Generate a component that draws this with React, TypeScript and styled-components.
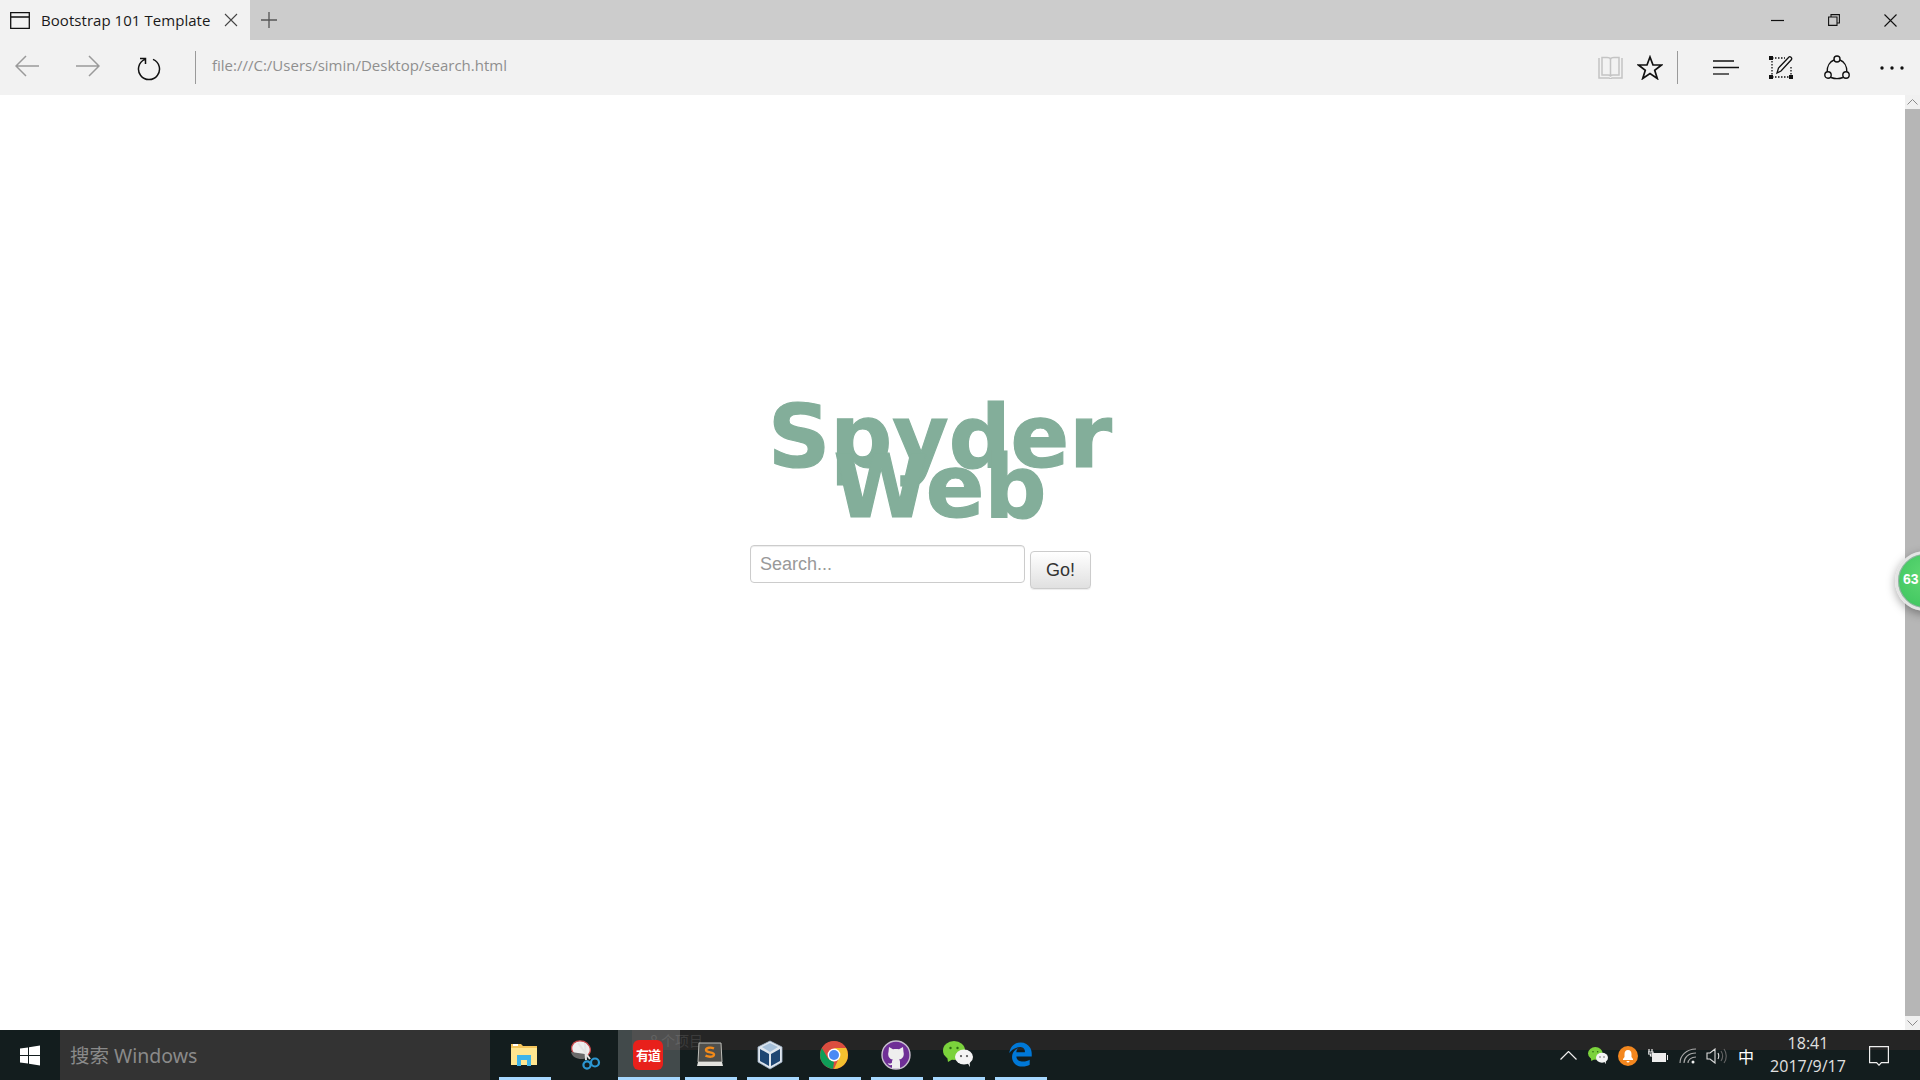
import React from "react";
import styled, { createGlobalStyle } from "styled-components";
import { FaEdgeLegacy } from "react-icons/fa6";

const Global = createGlobalStyle`
  html, body { margin: 0; padding: 0; height: 100%; overflow: hidden; background: #fff; }
  #root { height: 100%; }
  * { box-sizing: border-box; }
`;

const Windowed = styled.div`
  width: 1920px; height: 1080px; display: flex; flex-direction: column; position: relative; overflow: hidden;
  font-family: "Open Sans", "Noto Sans", sans-serif;
`;
const TabBar = styled.div`height: 40px; background: #cccccc; display: flex; align-items: center; flex: none;`;
const Tab = styled.div`
  width: 250px; height: 40px; background: #f2f2f2; display: flex; align-items: center; padding-left: 10px; flex: none;
`;
const TabTitle = styled.span`
  font-size: 15px; color: #1a1a1a; margin-left: 11px; width: 183px; white-space: nowrap; letter-spacing: 0.05px;
`;
const NewTab = styled.div`margin-left: 10px; display: flex;`;
const WindowControls = styled.div`margin-left: auto; display: flex; align-items: center; gap: 44px; padding-right: 23px;`;
const ToolBar = styled.div`height: 55px; background: #f2f2f2; display: flex; align-items: center; flex: none;`;
const NavSlot = styled.div`width: 61px; display: flex; justify-content: center; flex: none;`;
const NavGroup = styled.div`display: flex; margin-left: -4px;`;
const Divider = styled.div`width: 1px; height: 33px; background: #9a9a9a; flex: none;`;
const AddressDivider = styled(Divider)`margin-left: 16px;`;
const Address = styled.span`font-size: 15px; color: #8f8f8f; margin: -6px 0 0 16px; letter-spacing: 0;`;
const RightTools = styled.div`margin-left: auto; display: flex; align-items: center;`;
const HubSlot = styled.div`width: 55.5px; display: flex; justify-content: center; flex: none;`;
const SmallSlot = styled.div`width: 39px; display: flex; justify-content: center; flex: none;`;
const ToolDivider = styled(Divider)`margin: 0 20px 0 8px;`;

const Viewport = styled.div`flex: 1; display: flex; min-height: 0;`;
const Page = styled.div`flex: 1; background: #fff; padding: 317px 0 0 750px;`;
const Brand = styled.div`
  width: 380px; text-align: center; font-family: "DejaVu Sans", sans-serif; font-weight: 700;
  font-size: 86.5px; line-height: 50px; color: #83ae9a; -webkit-text-stroke: 1.2px #83ae9a;
`;
const SearchRow = styled.div`display: flex; align-items: flex-start; gap: 5px; margin-top: 33px;`;
const SearchInput = styled.input`
  width: 275px; height: 38px; border: 1px solid #ccc; border-radius: 4px; padding: 0 9px;
  font: 18px "Liberation Sans", Arial, sans-serif; color: #333; outline: none; box-shadow: inset 0 1px 1px rgba(0,0,0,.075);
  &::placeholder { color: #999; opacity: 1; }
`;
const GoButton = styled.button`
  width: 61px; height: 38px; margin-top: 6px; border: 1px solid #ccc; border-radius: 4px; padding: 0;
  font: 18px "Liberation Sans", Arial, sans-serif; color: #333;
  background: linear-gradient(to bottom, #fff 0%, #e0e0e0 100%);
  box-shadow: inset 0 1px 0 rgba(255,255,255,.15), 0 1px 1px rgba(0,0,0,.075);
`;
const Scrollbar = styled.div`width: 15px; background: #f0f0f0; display: flex; flex-direction: column; flex: none;`;
const ScrollArrow = styled.div`height: 14px; display: flex; align-items: center; justify-content: center; flex: none;`;
const ScrollThumb = styled.div`flex: 1; background: #b6b6b6;`;
const SpeedBall = styled.div`
  position: absolute; left: 1895px; top: 551px; width: 60px; height: 60px; border-radius: 50%;
  background: radial-gradient(circle at 50% 40%, #5fd873 0%, #45c963 70%, #3cba58 100%);
  border: 3px solid #e4e4e4; box-shadow: 0 3px 10px rgba(0,0,0,.35), inset 0 0 0 1px #9aa;
  color: #fff; font: 700 14px "Liberation Sans", Arial, sans-serif; padding: 17px 0 0 5px;
`;

const TaskBar = styled.div`height: 50px; background: #131d1e; display: flex; position: relative; flex: none;`;
const GhostBand = styled.div`
  position: absolute; left: 632px; right: 0; top: 0; height: 20px; background: #252525; color: #3c3c3c; font-size: 14px;
  line-height: 20px; padding-left: 18px; font-family: "Noto Sans CJK SC", sans-serif;
`;
const StartCell = styled.div`width: 60px; display: flex; align-items: center; justify-content: center; flex: none;`;
const SearchBox = styled.div`
  width: 430px; background: #333333; color: #8a8a8a; font-size: 19.5px; display: flex; align-items: center; padding: 0 0 2px 10px;
  font-family: "Noto Sans", "Noto Sans CJK SC", sans-serif; flex: none;
`;
const AppList = styled.div`display: flex; margin-left: 4px; flex: none;`;
const AppCell = styled.div<{ $active?: boolean; $open?: boolean }>`
  width: 62px; height: 50px; position: relative; display: flex; align-items: center; justify-content: center;
  padding: 0 2px 1px 0; z-index: 1;
  background: ${(p) => (p.$active ? "rgba(255,255,255,.2)" : "transparent")};
  &::after {
    content: ""; position: absolute; bottom: 0; height: 3px; background: #a6d8ff;
    left: ${(p) => (p.$active ? "0" : "5px")}; right: ${(p) => (p.$active ? "0" : "5px")};
    display: ${(p) => (p.$open ? "block" : "none")};
  }
`;
const YoudaoIcon = styled.div`
  width: 30px; height: 30px; border-radius: 6px; background: #e8201b; color: #fff; font: 700 13px "Noto Sans CJK SC", sans-serif;
  display: flex; align-items: center; justify-content: center; letter-spacing: -1px;
`;
const EdgeIcon = styled(FaEdgeLegacy)`color: #0078d7; width: 25px; height: 27px;`;
const VBoxSvg = styled.svg`margin-right: 4px;`;
const Tray = styled.div`margin-left: auto; display: flex; align-items: center; z-index: 1; padding-top: 1px;`;
const TrayItem = styled.div<{ $w: number }>`width: ${(p) => p.$w}px; display: flex; justify-content: center; flex: none;`;
const ImeLabel = styled.span`color: #fff; font: 16px "Noto Sans CJK SC", sans-serif; line-height: 20px;`;
const Clock = styled.div`
  width: 92px; margin: -1px 15px 0 0; color: #e0e0e0; font-size: 16px; text-align: center; line-height: 23px; white-space: nowrap;
`;

const line = { fill: "none", stroke: "#111", strokeWidth: 1.3 };
const grey = { fill: "none", stroke: "#9a9a9a", strokeWidth: 1.5 };

const WinLogo = () => (
  <svg width="20" height="21" viewBox="0 0 20 21"><path fill="#fff" d="M0 3.500l8-1.100v7.600H0zM9 2.200L20 .5v9.500H9zM0 11h8v7.600L0 17.500zM9 11h11v9.500L9 18.800z"/></svg>
);
const Folder = () => (
  <svg width="28" height="26" viewBox="0 0 28 26"><path fill="#f4c55c" d="M1 2h10l2 2h14v19H1z"/><path fill="#ffe68f" d="M1 6h26v17H1z"/><path fill="#fff" d="M3 2h5v2H3z"/><path fill="#3db4ea" d="M7 24V13h14v11h-4v-6h-6v6z"/></svg>
);
const Snip = () => (
  <svg width="30" height="30" viewBox="0 0 30 30">
    <ellipse cx="10" cy="9" rx="9.500" ry="8" fill="#eee" stroke="#c8474a" strokeWidth="1.300" transform="rotate(20 10 9)"/>
    <path fill="#6a6a6a" d="M0 12c1 7 12 9 17 5l-3-3z"/>
    <path stroke="#e4e4e4" strokeWidth="2" d="M7 3l12 16M14 3l1 17" fill="none"/>
    <circle cx="24" cy="22.500" r="4" fill="none" stroke="#2c97d3" strokeWidth="2.200"/>
    <circle cx="16" cy="25" r="3.600" fill="none" stroke="#2c97d3" strokeWidth="2.200"/>
  </svg>
);
const Sublime = () => (
  <svg width="28" height="26" viewBox="0 0 28 26">
    <path fill="#4f4f4c" stroke="#bdbdb8" strokeWidth="1" d="M3 1h22l1 19H2z"/>
    <path fill="#e3e3df" d="M2 20h24l1 4H1z"/>
    <path fill="none" stroke="#f28a1a" strokeWidth="2.400" d="M18 6.500c-3-1.400-8-1.200-8 1.600 0 3.200 8 1.300 8 4.400 0 2.700-5 2.700-8.500 1.200"/>
  </svg>
);
const VBox = () => (
  <VBoxSvg width="26" height="30" viewBox="0 0 26 30">
    <path fill="#dfe6ee" stroke="#9fb2c8" strokeWidth=".8" d="M13 1l12 6v15l-12 7-12-7V7z"/>
    <path fill="#1e4673" d="M3 9l9 5v12l-9-5z"/><path fill="#1e4673" d="M14 14l9-5v12l-9 5z"/>
    <path fill="#a6c0da" d="M13 3l8 4-8 5-8-5z"/>
  </VBoxSvg>
);
const Chrome = () => (
  <svg width="28" height="28" viewBox="0 0 28 28">
    <circle cx="14" cy="14" r="14" fill="#db4d3f"/>
    <path fill="#0f9d58" d="M14 28A14 14 0 0 1 1.900 7L8 17.500l6 3.500-1 7z"/>
    <path fill="#f3c02f" d="M14 28a14 14 0 0 0 12.100-21H14l6 7.500z"/>
    <path fill="#db4d3f" d="M2 7a14 14 0 0 1 24 0H14L8 12z"/>
    <circle cx="14" cy="14" r="6.400" fill="#fff"/><circle cx="14" cy="14" r="5" fill="#4a8af4"/>
  </svg>
);
const GitHub = () => (
  <svg width="30" height="30" viewBox="0 0 30 30">
    <circle cx="15" cy="15" r="14" fill="#6f2f96" stroke="#c9c0cf" strokeWidth="1.400"/>
    <path fill="#eee" d="M8 7l4 2.200c2-.4 4-.4 6 0L22 7l.5 5c1 3.500-.6 7-4.500 7.600.7.500 1 1.400 1 2.400v6.500h-8V25c-2 .4-3.500 0-4.300-2 1.400.7 3 1 4.200-.3 0-1 .2-2.200.9-3.100C8 19 6.500 15.500 7.500 12z"/>
  </svg>
);
const WeChat = ({ s = 30 }: { s?: number }) => (
  <svg width={s} height={s * 0.87} viewBox="0 0 30 26">
    <ellipse cx="11" cy="9.500" rx="11" ry="9.500" fill="#7bd23c"/><path fill="#7bd23c" d="M4 15l1 6 5-3z"/>
    <circle cx="7.500" cy="7" r="1.200" fill="#2c6b12"/><circle cx="14.500" cy="7" r="1.200" fill="#2c6b12"/>
    <ellipse cx="21" cy="16" rx="9" ry="7.500" fill="#f4f4f4"/><path fill="#f4f4f4" d="M24 21l3 5-.5-6z"/>
    <circle cx="18" cy="15" r="1.100" fill="#555"/><circle cx="24" cy="15" r="1.100" fill="#555"/>
  </svg>
);
const Bell = () => (
  <svg width="20" height="20" viewBox="0 0 20 20">
    <circle cx="10" cy="10" r="10" fill="#f3871f"/>
    <path fill="#fff" d="M10 4c-2.500 0-3.500 2-3.500 4v3L5 13v1h10v-1l-1.500-2V8c0-2-1-4-3.500-4zM8.500 15a1.500 1.500 0 0 0 3 0z"/>
  </svg>
);

export default function App() {
  return (
    <Windowed>
      <Global />
      <TabBar>
        <Tab>
          <svg width="20" height="17" viewBox="0 0 20 17"><path {...line} d="M.7.7h18.600v15.600H.7zM.7 5h18.600"/></svg>
          <TabTitle>Bootstrap 101 Template</TabTitle>
          <svg width="14" height="14" viewBox="0 0 14 14"><path fill="none" stroke="#444" strokeWidth="1.100" d="M1 1l12 12M13 1L1 13"/></svg>
        </Tab>
        <NewTab>
          <svg width="18" height="18" viewBox="0 0 18 18"><path fill="none" stroke="#555" strokeWidth="1.300" d="M9 1v16M1 9h16"/></svg>
        </NewTab>
        <WindowControls>
          <svg width="13" height="3" viewBox="0 0 13 3"><path stroke="#111" strokeWidth="1.200" d="M0 1.500h13"/></svg>
          <svg width="12" height="12" viewBox="0 0 12 12"><path {...line} strokeWidth={1.100} d="M.6 3h8.400v8.400H.6zM3 3V.6h8.400V9H9"/></svg>
          <svg width="13" height="13" viewBox="0 0 13 13"><path fill="none" stroke="#111" strokeWidth="1.100" d="M.5.5l12 12M12.500.5l-12 12"/></svg>
        </WindowControls>
      </TabBar>
      <ToolBar>
        <NavGroup>
          <NavSlot><svg width="24" height="22" viewBox="0 0 24 22"><path {...grey} d="M24 11H1M11 1L1 11l10 10"/></svg></NavSlot>
          <NavSlot><svg width="24" height="22" viewBox="0 0 24 22"><path {...grey} d="M0 11h23M13 1l10 10-10 10"/></svg></NavSlot>
          <NavSlot><svg width="24" height="26" viewBox="0 0 24 26"><path {...line} strokeWidth={1.500} d="M8 4.400a10.500 10.500 0 1 0 8 0M3 3.500h5.500V9"/></svg></NavSlot>
        </NavGroup>
        <AddressDivider />
        <Address>file:///C:/Users/simin/Desktop/search.html</Address>
        <RightTools>
          <SmallSlot>
            <svg width="25" height="23" viewBox="0 0 25 23"><path fill="none" stroke="#c4c4c4" strokeWidth="1.500" d="M1 2v20h10l1.500 1 1.500-1h10V2M4 1.500h5c2 0 3.500 1 3.500 2 0-1 1.500-2 3.500-2h5V19h-6c-1 0-2 .5-2.500 1-.5-.5-1.500-1-2.500-1H4zM12.500 3.500V20"/></svg>
          </SmallSlot>
          <SmallSlot>
            <svg width="26" height="25" viewBox="0 0 26 25"><path fill="none" stroke="#111" strokeWidth="1.700" d="M13 2l3 8h8.500l-6.800 5.200 2.600 8.300L13 18.500l-7.300 5 2.600-8.300L1.500 10H10z"/></svg>
          </SmallSlot>
          <ToolDivider />
          <HubSlot>
            <svg width="26" height="16" viewBox="0 0 26 16"><path stroke="#111" strokeWidth="1.500" fill="none" d="M0 1h21M0 7.500h26"/><path stroke="#333" strokeWidth="1.500" d="M0 14h16"/></svg>
          </HubSlot>
          <HubSlot>
            <svg width="25" height="25" viewBox="0 0 25 25">
              <path fill="none" stroke="#111" strokeWidth="1.300" strokeDasharray="1.500 1.500" d="M3 3h13M3 3v18M3 22h19M22 12v9"/>
              <path fill="#111" d="M0 1h4v4H0zM0 20h4v4H0zM20 20h4v4h-4z"/>
              <path fill="none" stroke="#111" strokeWidth="1.300" d="M8 18l1.500-5L20 2c1-1 3.500 1 2.500 2.500L12 16z"/>
            </svg>
          </HubSlot>
          <HubSlot>
            <svg width="26" height="26" viewBox="0 0 26 26">
              <g fill="none" stroke="#111" strokeWidth="1.400">
                <circle cx="13" cy="4" r="3"/><circle cx="4" cy="20" r="3.200"/><circle cx="22" cy="20" r="3.200"/>
                <path d="M16 5c4 1.500 7 6 6.800 11.800M10 5C6 6.500 3 11 3.200 16.800M7 22.500c4 1.500 8 1.500 12 0"/>
              </g>
            </svg>
          </HubSlot>
          <HubSlot>
            <svg width="24" height="4" viewBox="0 0 24 4"><g fill="#111"><circle cx="2" cy="2" r="1.700"/><circle cx="12" cy="2" r="1.700"/><circle cx="22" cy="2" r="1.700"/></g></svg>
          </HubSlot>
        </RightTools>
      </ToolBar>
      <Viewport>
        <Page>
          <Brand>Spyder<br />Web</Brand>
          <SearchRow>
            <SearchInput placeholder="Search..." />
            <GoButton>Go!</GoButton>
          </SearchRow>
        </Page>
        <Scrollbar>
          <ScrollArrow><svg width="11" height="6" viewBox="0 0 11 6"><path fill="none" stroke="#8a8a8a" d="M.5 5.500l5-5 5 5"/></svg></ScrollArrow>
          <ScrollThumb />
          <ScrollArrow><svg width="11" height="6" viewBox="0 0 11 6"><path fill="none" stroke="#8a8a8a" d="M.5.500l5 5 5-5"/></svg></ScrollArrow>
        </Scrollbar>
      </Viewport>
      <SpeedBall>63</SpeedBall>
      <TaskBar>
        <GhostBand>8 个项目</GhostBand>
        <StartCell><WinLogo /></StartCell>
        <SearchBox>搜索 Windows</SearchBox>
        <AppList>
          <AppCell $open><Folder /></AppCell>
          <AppCell><Snip /></AppCell>
          <AppCell $open $active><YoudaoIcon>有道</YoudaoIcon></AppCell>
          <AppCell $open><Sublime /></AppCell>
          <AppCell $open><VBox /></AppCell>
          <AppCell $open><Chrome /></AppCell>
          <AppCell $open><GitHub /></AppCell>
          <AppCell $open><WeChat /></AppCell>
          <AppCell $open><EdgeIcon /></AppCell>
        </AppList>
        <Tray>
          <TrayItem $w={29}><svg width="17" height="9" viewBox="0 0 17 9"><path fill="none" stroke="#eee" strokeWidth="1.200" d="M.5 8.500l8-8 8 8"/></svg></TrayItem>
          <TrayItem $w={30}><WeChat s={20} /></TrayItem>
          <TrayItem $w={30}><Bell /></TrayItem>
          <TrayItem $w={30}>
            <svg width="20" height="14" viewBox="0 0 20 14"><path fill="#eee" d="M4 4h14v9H4zM19 6h1v5h-1z"/><path stroke="#eee" strokeWidth="1.200" fill="none" d="M1 0v3M4 0v3M0 3h5v2H0zM2.500 5v2h2"/></svg>
          </TrayItem>
          <TrayItem $w={30}>
            <svg width="18" height="16" viewBox="0 0 18 16"><g fill="none" stroke="#aaa" strokeWidth="1.100"><path d="M1 15C1 8 7 1 17 1M5 15c0-5 4-10 12-10M9 15c0-3 3-6 8-6"/></g><circle cx="14" cy="14" r="1.500" fill="#eee"/></svg>
          </TrayItem>
          <TrayItem $w={27}>
            <svg width="21" height="16" viewBox="0 0 21 16"><path fill="none" stroke="#ddd" strokeWidth="1.100" d="M1 5h3l5-4v14l-5-4H1zM12 5c1 2 1 4 0 6"/><path fill="none" stroke="#666" strokeWidth="1.100" d="M15 3c2 3 2 7 0 10M18 1c3 4 3 10 0 14"/></svg>
          </TrayItem>
          <TrayItem $w={32}><ImeLabel>中</ImeLabel></TrayItem>
          <Clock>18:41<br />2017/9/17</Clock>
          <TrayItem $w={20}>
            <svg width="20" height="20" viewBox="0 0 20 20"><path fill="none" stroke="#eee" strokeWidth="1.200" d="M.6.6h18.800v16h-7l-2.400 2.600-2.400-2.600h-7z"/></svg>
          </TrayItem>
          <TrayItem $w={31} />
        </Tray>
      </TaskBar>
    </Windowed>
  );
}
